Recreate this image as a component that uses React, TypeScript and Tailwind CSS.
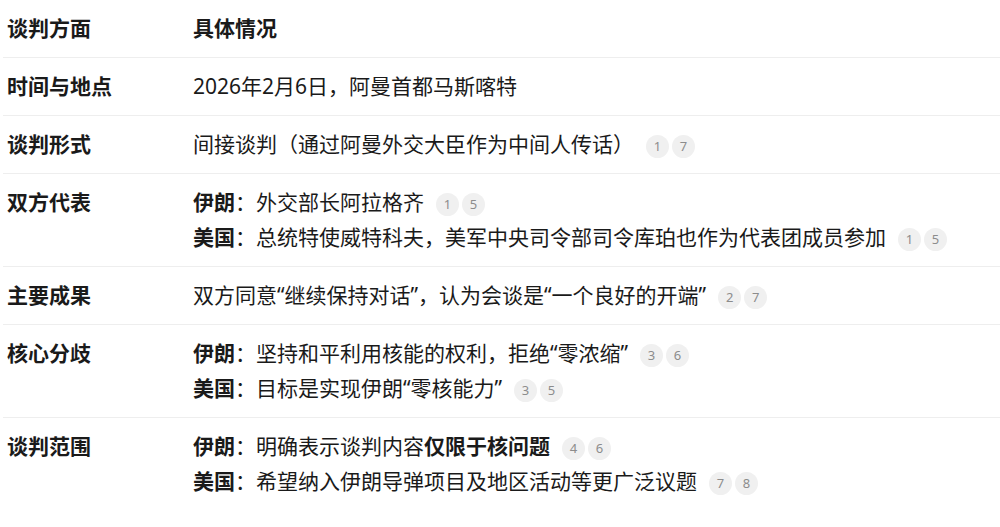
import React from "react";

type Cite = number[];

const Badges = ({ nums }: { nums: Cite }) => (
  <span className="ml-[12px] inline-flex gap-[3px] align-middle">
    {nums.map((n, i) => (
      <span
        key={i}
        className="inline-flex h-[23px] w-[23px] items-center justify-center rounded-full bg-[#f0f0f0] text-[13px] leading-none text-[#8c8c8c]"
      >
        {n}
      </span>
    ))}
  </span>
);

const Who = ({ name }: { name: string }) => (
  <>
    <span className="font-bold">{name}</span>：
  </>
);

const rows: { label: string; content: React.ReactNode }[] = [
  {
    label: "时间与地点",
    content: <div>2026年2月6日，阿曼首都马斯喀特</div>,
  },
  {
    label: "谈判形式",
    content: (
      <div>
        间接谈判（通过阿曼外交大臣作为中间人传话）
        <Badges nums={[1, 7]} />
      </div>
    ),
  },
  {
    label: "双方代表",
    content: (
      <>
        <div>
          <Who name="伊朗" />
          外交部长阿拉格齐
          <Badges nums={[1, 5]} />
        </div>
        <div>
          <Who name="美国" />
          总统特使威特科夫，美军中央司令部司令库珀也作为代表团成员参加
          <Badges nums={[1, 5]} />
        </div>
      </>
    ),
  },
  {
    label: "主要成果",
    content: (
      <div>
        双方同意“继续保持对话”，认为会谈是“一个良好的开端”
        <Badges nums={[2, 7]} />
      </div>
    ),
  },
  {
    label: "核心分歧",
    content: (
      <>
        <div>
          <Who name="伊朗" />
          坚持和平利用核能的权利，拒绝“零浓缩”
          <Badges nums={[3, 6]} />
        </div>
        <div>
          <Who name="美国" />
          目标是实现伊朗“零核能力”
          <Badges nums={[3, 5]} />
        </div>
      </>
    ),
  },
  {
    label: "谈判范围",
    content: (
      <>
        <div>
          <Who name="伊朗" />
          明确表示谈判内容<span className="font-bold">仅限于核问题</span>
          <Badges nums={[4, 6]} />
        </div>
        <div>
          <Who name="美国" />
          希望纳入伊朗导弹项目及地区活动等更广泛议题
          <Badges nums={[7, 8]} />
        </div>
      </>
    ),
  },
];

export default function App() {
  return (
    <div
      className="min-h-[527px] w-[1000px] overflow-hidden bg-white pl-[3px] text-[21px] leading-[35px] text-[#1a1a1a]"
      style={{ fontFamily: '"Noto Sans", "Noto Sans CJK SC", sans-serif' }}
    >
      <table className="w-[1100px] border-collapse">
        <thead>
          <tr className="border-b border-[#eeeeee]">
            <th className="w-[186px] py-[11px] pl-1 text-left font-bold">谈判方面</th>
            <th className="py-[11px] pl-1 text-left font-bold">具体情况</th>
          </tr>
        </thead>
        <tbody>
          {rows.map((r, i) => (
            <tr
              key={r.label}
              className={i < rows.length - 1 ? "border-b border-[#eeeeee]" : ""}
            >
              <td className="py-[11px] pl-1 align-top font-bold">{r.label}</td>
              <td className="py-[11px] pl-1 align-top">{r.content}</td>
            </tr>
          ))}
        </tbody>
      </table>
    </div>
  );
}
